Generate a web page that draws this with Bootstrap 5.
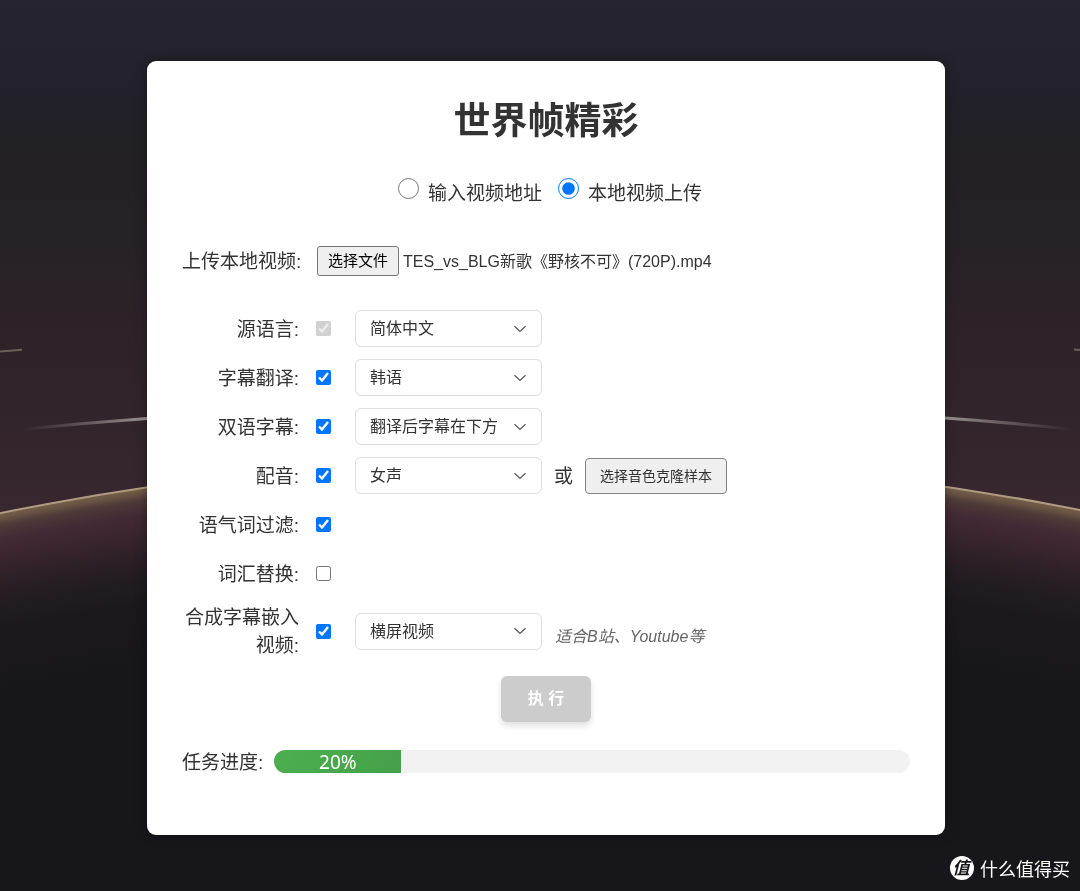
<!DOCTYPE html>
<html lang="zh-CN">
<head>
<meta charset="utf-8">
<meta name="viewport" content="width=device-width, initial-scale=1">
<title>世界帧精彩</title>
<link href="https://cdn.jsdelivr.net/npm/bootstrap@5.3.0/dist/css/bootstrap.min.css" rel="stylesheet">
<style>
  body { font-family: "Liberation Sans", "Noto Sans CJK SC", sans-serif; font-size: 19px; line-height: 28px; color: #333; background: #17161b; }
  .backdrop { position: fixed; inset: 0; width: 100%; height: 100%; z-index: -1; }
  .page-wrap { padding: 61px 0 57px 12px; }
  .panel { max-width: 798px; padding: 38px 35px 58px; border-radius: 9px; box-shadow: 0 0 12px rgba(0, 0, 0, .35); }
  .panel h1 { font-size: 37px; line-height: 46px; font-weight: 700; color: #333; margin-bottom: 33px; }
  .source-pick { gap: 16px; margin-bottom: 38px; padding-left: 8px; }
  .source-pick input { width: 21px; height: 21px; margin: 0 9px 0 0; }
  .source-pick label { padding-top: 2px; }
  .field-label { width: 117px; flex: none; text-align: right; padding-top: 2px; }
  .pick-file { font-size: 15px; line-height: 24px; color: #000; background: #efefef; border: 1px solid #767676; border-radius: 3px; padding: 2px 10px; margin: 0 4px 0 18px; }
  .file-name { font-size: 16px; padding-top: 2px; }
  .upload-row { min-height: 30px; margin-bottom: 34px; }
  .options { display: grid; gap: 12px; }
  .option-row { display: flex; align-items: center; min-height: 37px; }
  .option-row:last-child { margin-top: -2px; }
  .option-row input { width: 15px; height: 15px; margin: 0 24px 0 17px; flex: none; }
  .option-row .form-select {
    width: 187px; height: 37px; flex: none; font-size: 16px; line-height: 24px; color: #333; padding: 6px 34px 5px 14px;
    border: 1px solid #ddd; border-radius: 6px; background-position: right 14px center; background-size: 14px 14px;
    background-image: url("data:image/svg+xml,%3Csvg xmlns='http://www.w3.org/2000/svg' viewBox='0 0 14 14'%3E%3Cpath d='M1.5 4.2 7 9.5l5.5-5.3' fill='none' stroke='%23555' stroke-width='1.2'/%3E%3C/svg%3E");
  }
  .clone-btn { font-size: 14px; line-height: 20px; color: #333; background: #efefef; border: 1px solid #858585; border-radius: 4px; padding: 7px 14px; }
  .or-word { margin: 0 12px; padding-top: 2px; }
  .hint { font-size: 16px; font-style: italic; color: #666; margin: 12px 0 0 13px; }
  .run-btn, .run-btn:disabled { font-size: 16px; line-height: 24px; font-weight: 700; color: #fff; background: #ccc; border: 0; border-radius: 6px; padding: 11px 27px; opacity: 1; box-shadow: 0 4px 6px rgba(0, 0, 0, .12); }
  .task-row { margin-top: 24px; gap: 11px; }
  .task-row .progress { height: 23px; border-radius: 12px; background: #f2f2f2; font-size: 19px; }
  .task-row .progress-bar { background: linear-gradient(135deg, #4caf50, #45a049); font-family: "Noto Sans", sans-serif; }
  .task-label { padding-top: 3px; }
  .watermark { position: fixed; right: 10px; bottom: 9px; gap: 6px; font-family: "Noto Sans CJK SC", sans-serif; font-size: 18px; color: #fff; }
</style>
</head>
<body>
<svg class="backdrop" viewBox="0 0 1080 891" preserveAspectRatio="none" aria-hidden="true">
  <defs>
    <linearGradient id="sky" x1="0" y1="0" x2="0" y2="520" gradientUnits="userSpaceOnUse">
      <stop offset="0" stop-color="#26242f"/><stop offset=".2" stop-color="#22212a"/><stop offset=".27" stop-color="#222126"/>
      <stop offset=".45" stop-color="#262126"/><stop offset=".7" stop-color="#2f2329"/><stop offset="1" stop-color="#38272f"/>
    </linearGradient>
    <radialGradient id="planet" cx="548" cy="3208" r="2750" gradientUnits="userSpaceOnUse">
      <stop offset=".935" stop-color="#17161b"/><stop offset=".958" stop-color="#1b191e"/><stop offset=".97" stop-color="#241d23"/>
      <stop offset=".981" stop-color="#35232b"/><stop offset=".9905" stop-color="#432a34"/><stop offset=".9955" stop-color="#4e3a38"/>
      <stop offset=".9983" stop-color="#6a5544"/><stop offset="1" stop-color="#756049"/>
    </radialGradient>
    <linearGradient id="trailL" x1="20" y1="0" x2="147" y2="0" gradientUnits="userSpaceOnUse">
      <stop offset="0" stop-color="#857c7c" stop-opacity="0"/><stop offset="1" stop-color="#9a9292"/>
    </linearGradient>
    <linearGradient id="trailR" x1="945" y1="0" x2="1074" y2="0" gradientUnits="userSpaceOnUse">
      <stop offset="0" stop-color="#9a9292"/><stop offset="1" stop-color="#857c7c" stop-opacity="0"/>
    </linearGradient>
  </defs>
  <rect width="1080" height="891" fill="url(#sky)"/>
  <circle cx="548" cy="3208" r="2750" fill="url(#planet)" stroke="#b29a82" stroke-width="2"/>
  <path d="M0 351.5 22 349.8" stroke="#6b6059" stroke-width="2"/>
  <path d="M1074 349.6 1080 350" stroke="#6b6059" stroke-width="2"/>
  <path d="M20 429.5Q84 423 147 418.5" fill="none" stroke="url(#trailL)" stroke-width="3"/>
  <path d="M945 418Q1010 422.500 1074 429.5" fill="none" stroke="url(#trailR)" stroke-width="3"/>
</svg>

<div class="page-wrap">
<main class="panel bg-white mx-auto">
  <h1 class="text-center">世界帧精彩</h1>
  <form>
    <div class="source-pick d-flex justify-content-center">
      <div class="d-flex align-items-start"><input type="radio" name="source" id="srcUrl"><label for="srcUrl">输入视频地址</label></div>
      <div class="d-flex align-items-start"><input type="radio" name="source" id="srcFile" checked><label for="srcFile">本地视频上传</label></div>
    </div>

    <div class="upload-row d-flex align-items-center">
      <label class="field-label text-nowrap" for="pickFile">上传本地视频:</label>
      <button type="button" id="pickFile" class="pick-file">选择文件</button>
      <span class="file-name">TES_vs_BLG新歌《野核不可》(720P).mp4</span>
    </div>

    <div class="options">
      <div class="option-row">
        <label class="field-label" for="srcLang">源语言:</label>
        <input type="checkbox" checked disabled aria-label="源语言">
        <select class="form-select" id="srcLang"><option>简体中文</option></select>
      </div>
      <div class="option-row">
        <label class="field-label" for="translate">字幕翻译:</label>
        <input type="checkbox" id="translate" checked>
        <select class="form-select" aria-label="字幕翻译"><option>韩语</option></select>
      </div>
      <div class="option-row">
        <label class="field-label" for="bilingual">双语字幕:</label>
        <input type="checkbox" id="bilingual" checked>
        <select class="form-select" aria-label="双语字幕"><option>翻译后字幕在下方</option></select>
      </div>
      <div class="option-row">
        <label class="field-label" for="dub">配音:</label>
        <input type="checkbox" id="dub" checked>
        <select class="form-select" aria-label="配音"><option>女声</option></select>
        <span class="or-word">或</span>
        <button type="button" class="clone-btn">选择音色克隆样本</button>
      </div>
      <div class="option-row">
        <label class="field-label" for="filler">语气词过滤:</label>
        <input type="checkbox" id="filler" checked>
      </div>
      <div class="option-row">
        <label class="field-label" for="replace">词汇替换:</label>
        <input type="checkbox" id="replace">
      </div>
      <div class="option-row">
        <label class="field-label" for="embed">合成字幕嵌入视频:</label>
        <input type="checkbox" id="embed" checked>
        <select class="form-select" aria-label="视频方向"><option>横屏视频</option></select>
        <span class="hint">适合B站、Youtube等</span>
      </div>
    </div>

    <div class="text-center mt-3"><button type="submit" class="run-btn" disabled>执 行</button></div>

    <div class="task-row d-flex align-items-center">
      <span class="task-label">任务进度:</span>
      <div class="progress flex-grow-1" role="progressbar" aria-label="任务进度" aria-valuenow="20" aria-valuemin="0" aria-valuemax="100">
        <div class="progress-bar" style="width: 20%">20%</div>
      </div>
    </div>
  </form>
</main>
</div>

<div class="watermark d-flex align-items-center">
  <svg width="24" height="24" viewBox="0 0 24 24" overflow="visible" aria-hidden="true">
    <circle cx="12" cy="12" r="12" fill="#fff"/>
    <text x="11" y="18" text-anchor="middle" font-size="17" font-weight="700" font-style="italic" font-family="Noto Sans CJK SC, sans-serif" fill="#17161b">值</text>
  </svg>
  <span>什么值得买</span>
</div>
<script src="https://cdn.jsdelivr.net/npm/bootstrap@5.3.0/dist/js/bootstrap.bundle.min.js"></script>
</body>
</html>
